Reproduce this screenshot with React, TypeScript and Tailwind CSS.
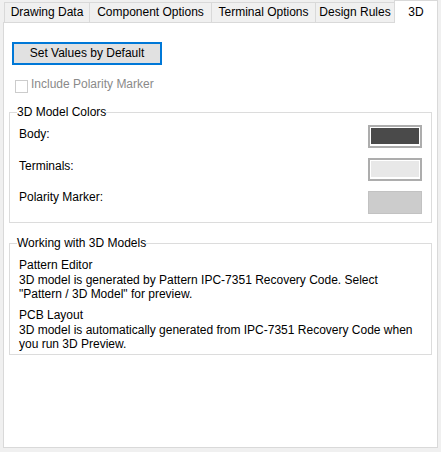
import React from "react";

// ─── Tabs ────────────────────────────────────────────────────────────────────

const tabs = [
  { label: "Drawing Data", width: "w-[86px]" },
  { label: "Component Options", width: "w-[123px] -ml-px" },
  { label: "Terminal Options", width: "w-[105px] -ml-px" },
  { label: "Design Rules", width: "w-[80px] -ml-px" },
];

function TabStrip() {
  return (
    <div className="flex items-end h-[22px] pl-[4px]">
      {tabs.map((tab) => (
        <div
          key={tab.label}
          className={`${tab.width} h-[20px] border border-b-0 border-[#d9d9d9] bg-[#f0f0f0] text-center leading-[19px] whitespace-nowrap`}
        >
          {tab.label}
        </div>
      ))}
      <div className="relative z-10 w-[44px] h-[23px] -ml-px -mb-px border border-b-0 border-[#d9d9d9] bg-white text-center pt-px leading-[20px]">
        3D
      </div>
    </div>
  );
}

// ─── Colour swatches ────────────────────────────────────────────────────────

function Swatch({ color }: { color: string }) {
  return (
    <div className="w-[54px] h-[23px] mr-[2px] border-2 border-[#adadad] bg-white pt-px pl-px pr-px pb-[2px]">
      <div className={`w-full h-full ${color}`} />
    </div>
  );
}

export default function App() {
  return (
    <div className="w-[441px] h-[452px] bg-[#f0f0f0] font-['Liberation_Sans',Arial,sans-serif] text-[12px] text-black">
      <TabStrip />

      <div className="ml-[3px] w-[435px] h-[426px] border border-[#d9d9d9] bg-white">
        <button className="block mt-[19px] ml-[8px] w-[150px] h-[23px] border-2 border-[#0078d7] bg-[#e1e1e1] text-center leading-[19px]">
          Set Values by Default
        </button>

        <div className="flex items-start mt-[12px] ml-[11px]">
          <div className="mt-[3px] w-[13px] h-[13px] border border-[#cccccc] bg-white" />
          <span className="ml-[3px] leading-[14px] text-[#8a8a8a]">Include Polarity Marker</span>
        </div>

        {/* 3D Model Colors */}
        <fieldset className="mt-[12px] ml-[5px] w-[423px] border border-[#dcdcdc] px-[7px] pt-[6px] pb-[8px]">
          <legend className="leading-[14px]">3D Model Colors</legend>
          <div className="flex flex-col gap-[10px]">
            <div className="flex justify-between items-start h-[23px]">
              <span className="pl-[2px] mt-[2px] leading-[14px]">Body:</span>
              <Swatch color="bg-[#4a4a4a]" />
            </div>
            <div className="flex justify-between items-start h-[23px]">
              <span className="pl-[2px] mt-px leading-[14px]">Terminals:</span>
              <Swatch color="bg-[#e8e8e8]" />
            </div>
            <div className="flex justify-between items-start h-[23px]">
              <span className="pl-[2px] -mt-px leading-[14px]">Polarity Marker:</span>
              <div className="w-[54px] h-[23px] mr-[2px] border border-[#c2c2c2] bg-[#cccccc]" />
            </div>
          </div>
        </fieldset>

        {/* Working with 3D Models */}
        <fieldset className="mt-[13px] ml-[5px] w-[423px] border border-[#dcdcdc] px-[7px] pt-[8px] pb-[3px]">
          <legend className="leading-[14px]">Working with 3D Models</legend>
          <div className="pl-[2px] w-[402px]">
            <div className="leading-[15px]">Pattern Editor</div>
            <p className="leading-[14px]">
              3D model is generated by Pattern IPC-7351 Recovery Code. Select "Pattern / 3D Model" for preview.
            </p>
            <div className="mt-[7px] leading-[15px]">PCB Layout</div>
            <p className="leading-[14px]">
              3D model is automatically generated from IPC-7351 Recovery Code when you run 3D Preview.
            </p>
          </div>
        </fieldset>
      </div>
    </div>
  );
}
